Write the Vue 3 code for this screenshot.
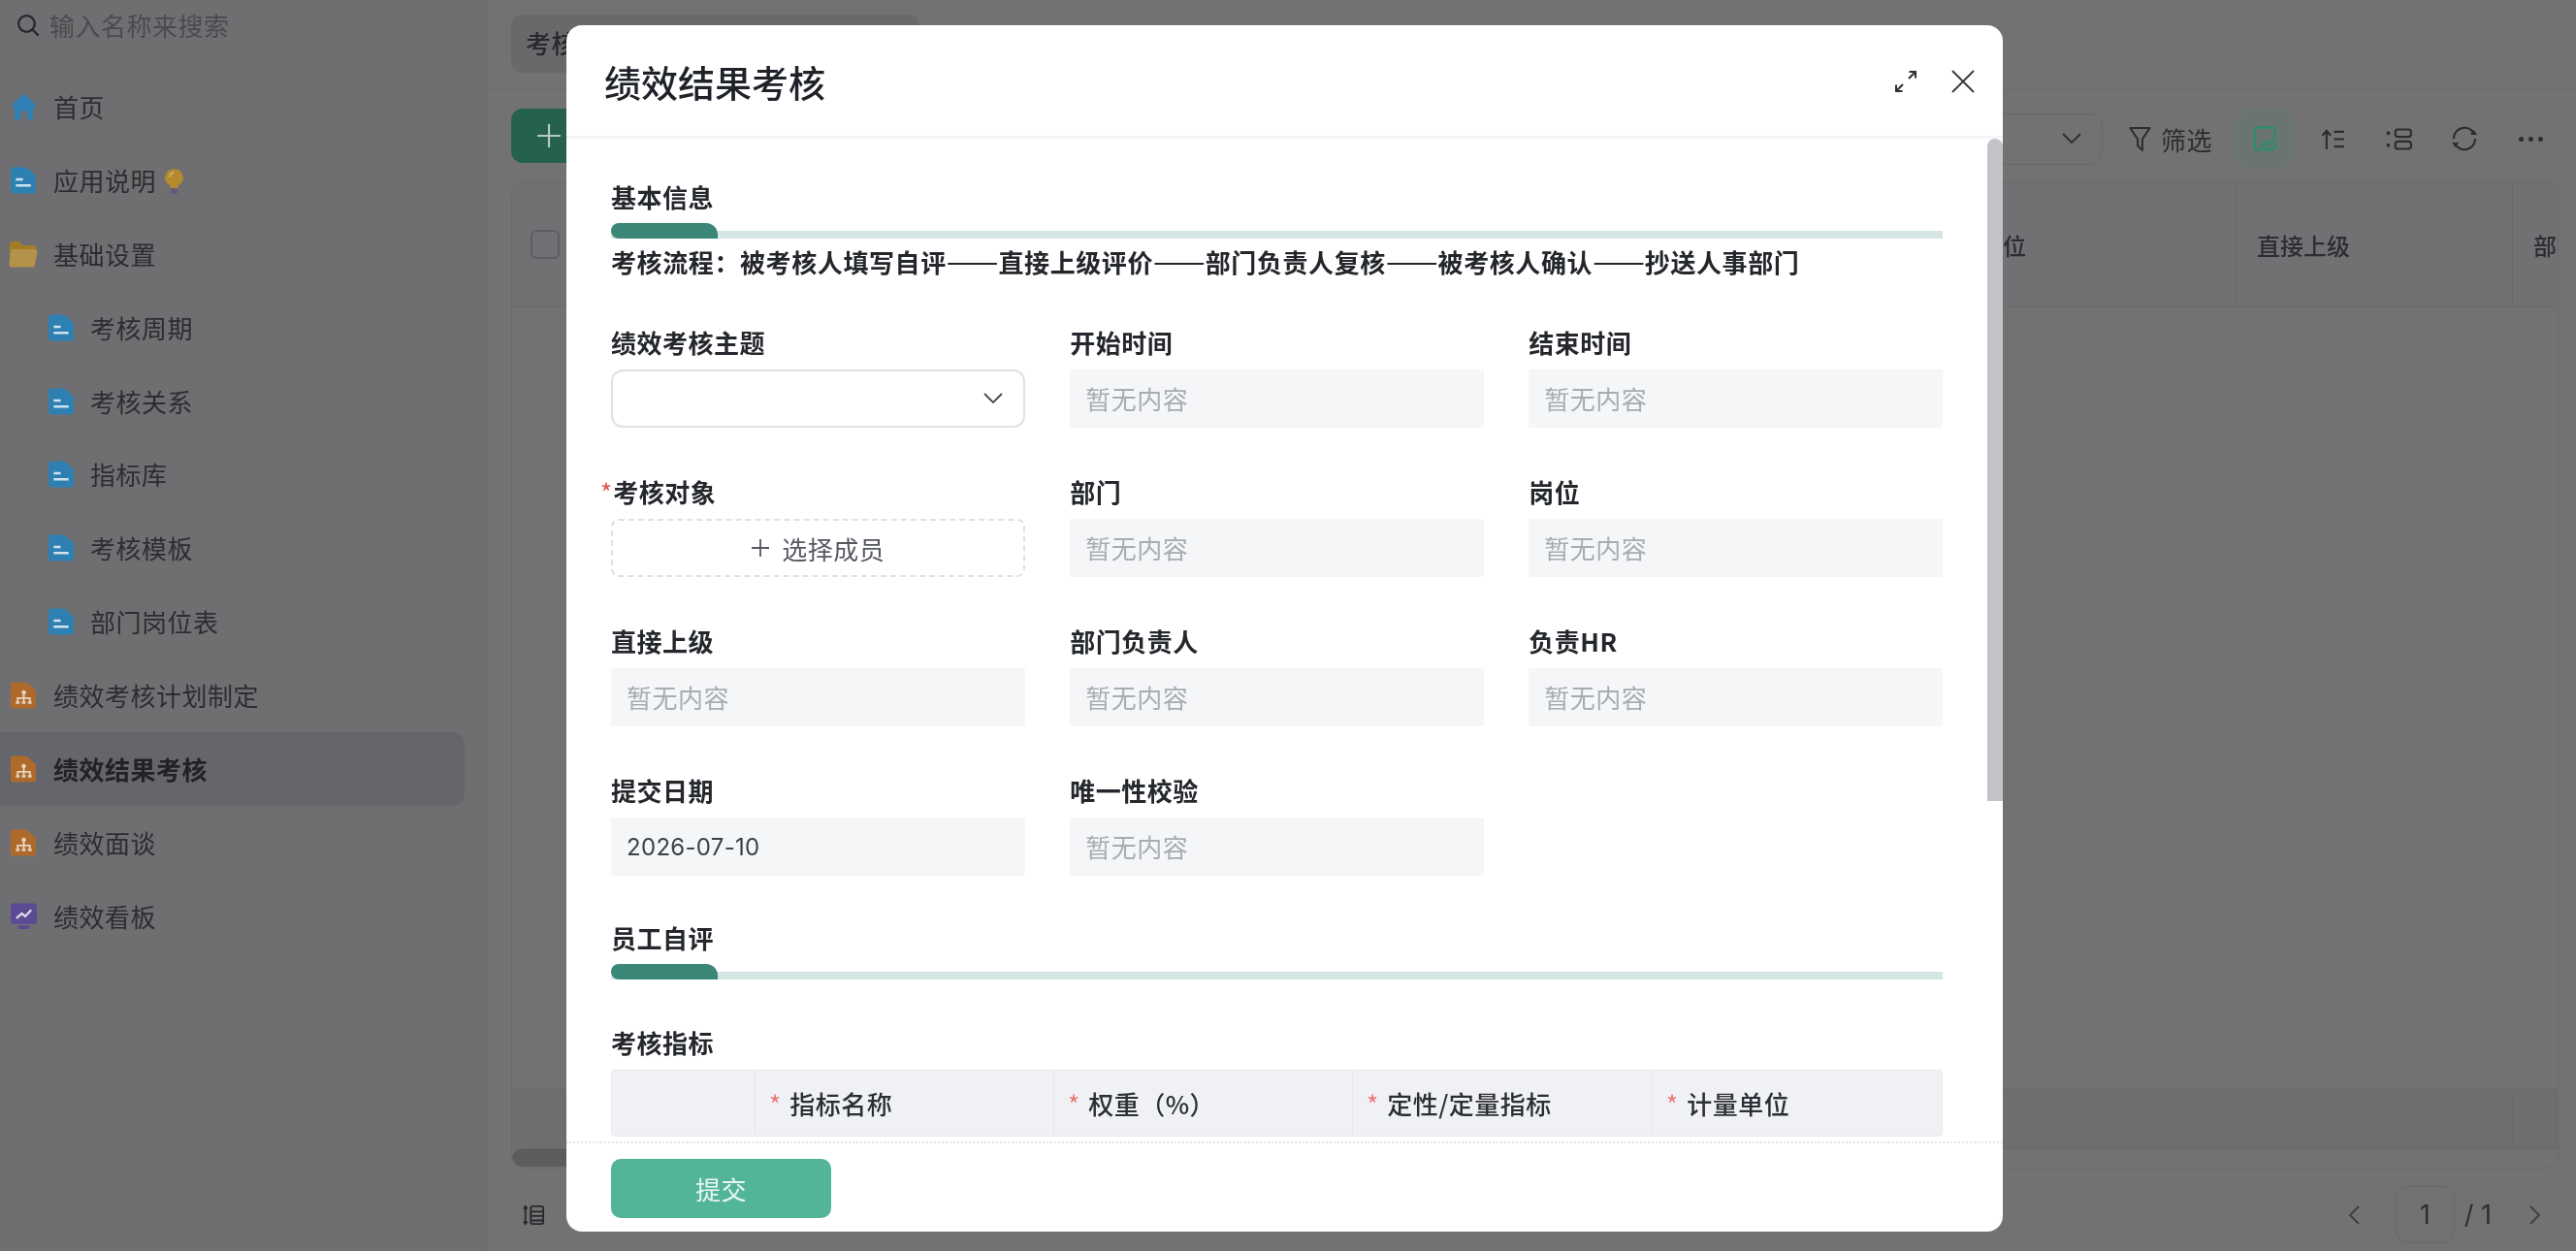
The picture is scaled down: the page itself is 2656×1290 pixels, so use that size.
<script setup>
const nav = [
  { label: '首页', icon: 'home' },
  { label: '应用说明', icon: 'doc', bulb: true },
  { label: '基础设置', icon: 'folder' },
  { label: '考核周期', icon: 'doc', sub: true },
  { label: '考核关系', icon: 'doc', sub: true },
  { label: '指标库', icon: 'doc', sub: true },
  { label: '考核模板', icon: 'doc', sub: true },
  { label: '部门岗位表', icon: 'doc', sub: true },
  { label: '绩效考核计划制定', icon: 'chart' },
  { label: '绩效结果考核', icon: 'chart', active: true },
  { label: '绩效面谈', icon: 'chart' },
  { label: '绩效看板', icon: 'board' }
]
const rows = [
  [{ label: '开始时间' }, { label: '结束时间' }],
  [{ label: '部门' }, { label: '岗位' }],
  [{ label: '直接上级' }, { label: '部门负责人' }, { label: '负责HR' }],
  [{ label: '提交日期', value: '2026-07-10' }, { label: '唯一性校验' }]
]
const metrics = ['指标名称', '权重（%）', '定性/定量指标', '计量单位']
</script>

<template>
  <div class="page">
    <aside class="side">
      <div class="search">
        <svg class="search-ico" viewBox="0 0 24 24" fill="none" stroke="#26282c" stroke-width="2.2" stroke-linecap="round"><circle cx="11" cy="11" r="8"/><path d="M17 17l5 5"/></svg>
        <span>输入名称来搜索</span>
      </div>
      <nav class="nav">
        <div v-for="item in nav" :key="item.label" class="nav-item" :class="{ sub: item.sub, active: item.active }">
          <svg v-if="item.icon === 'home'" class="nav-ico" viewBox="0 0 28 28"><path d="M14 0 28 13.500a.5.500 0 0 1-.4.8H24V26a2 2 0 0 1-2 2h-4.500v-9h-7v9H6a2 2 0 0 1-2-2V14.300H.4a.5.500 0 0 1-.4-.8Z" fill="#2f80b4"/></svg>
          <svg v-else-if="item.icon === 'doc'" class="nav-ico" viewBox="0 0 28 28"><path d="M3 0h14l10 9v16a3 3 0 0 1-3 3H3a3 3 0 0 1-3-3V3a3 3 0 0 1 3-3Z" fill="#2e80b2"/><path d="M5.500 13h7.500M5.500 19.500h16" stroke="#cfe2ee" stroke-width="2.600"/></svg>
          <svg v-else-if="item.icon === 'folder'" class="nav-ico folder" viewBox="0 0 30 28"><path d="M1 4a3 3 0 0 1 3-3h7l3 4h11a3 3 0 0 1 3 3v3H1Z" fill="#a67c22"/><path d="M4 9h23a2.500 2.500 0 0 1 2.500 3l-2.500 13a3 3 0 0 1-3 2.500H3a2.500 2.500 0 0 1-2.500-3L1.500 11.500A2.500 2.500 0 0 1 4 9Z" fill="#b5924a"/></svg>
          <svg v-else-if="item.icon === 'chart'" class="nav-ico" viewBox="0 0 28 28"><path d="M3 0h14l10 9v16a3 3 0 0 1-3 3H3a3 3 0 0 1-3-3V3a3 3 0 0 1 3-3Z" fill="#ad6a2b"/><circle cx="14" cy="11" r="2.400" fill="#e6d2bc"/><path d="M14 12v9M7.500 21v-4h13v4" fill="none" stroke="#e6d2bc" stroke-width="2"/><path d="M5.500 20.500h4v2.500h-4zM12 20.500h4v2.500h-4zM18.500 20.500h4v2.500h-4z" fill="#e6d2bc"/></svg>
          <svg v-else class="nav-ico" viewBox="0 0 28 28"><rect width="28" height="22" rx="3" fill="#5c4a94"/><path d="M8 23.500h12v4H8z" fill="#5c4a94"/><path d="M6 16l6-5 3.500 3L22 7" fill="none" stroke="#ddd6ea" stroke-width="2.400"/></svg>
          <span class="nav-text">{{ item.label }}</span>
          <svg v-if="item.bulb" class="bulb" viewBox="0 0 20 28"><path d="M10 0a9.500 9.500 0 0 1 6 17c-1.500 1.200-2 2.500-2 4H6c0-1.500-.5-2.800-2-4a9.500 9.500 0 0 1 6-17Z" fill="#b58a2c"/><path d="M5 9a5 5 0 0 1 5-5" fill="none" stroke="#cda95a" stroke-width="2.500"/><path d="M6.500 21h7v6h-7z" fill="#66597c"/></svg>
        </div>
      </nav>
    </aside>

    <main class="main">
      <div class="tabs"><div class="tab">考核</div></div>
      <div class="toolbar">
        <button class="add"><svg viewBox="0 0 24 24" width="26" height="26" fill="none" stroke="#b5c9c1" stroke-width="2"><path d="M12 1v22M1 12h22"/></svg></button>
        <div class="tools">
          <div class="view-select"><svg viewBox="0 0 20 12" width="20" height="12" fill="none" stroke="#2b2d31" stroke-width="1.800"><path d="M1 1l9 9 9-9"/></svg></div>
          <div class="filter">
            <svg viewBox="0 0 24 28" width="23" height="27" fill="none" stroke="#2b2d31" stroke-width="2.200"><path d="M1.500 2h21l-8 12v12l-5-5v-7Z" stroke-linejoin="round"/></svg>
            <span>筛选</span>
          </div>
          <div class="tool on"><svg viewBox="0 0 26 27" width="25" height="26" fill="none" stroke="#2f8b6d" stroke-width="2.600"><path d="M9 25.500H5a3.500 3.500 0 0 1-3.500-3.500V5A3.500 3.500 0 0 1 5 1.500h15A3.500 3.500 0 0 1 23.500 5v11"/><path d="M9 21c2-3 4.500-4.500 8-4.500s6 1.500 8 4.500c-2 3-4.500 4.500-8 4.500S11 24 9 21Z" fill="#6a7571"/><circle cx="17" cy="21" r="1.800" fill="#2f8b6d" stroke="none"/></svg></div>
          <div class="tool"><svg viewBox="0 0 26 22" width="25" height="21" fill="none" stroke="#2b2d31" stroke-width="2.200"><path d="M6 22V2M1.500 7 6 2l4.500 5M14 3h11M14 11h11M14 19h11"/></svg></div>
          <div class="tool"><svg viewBox="0 0 28 24" width="27" height="23" fill="none" stroke="#2b2d31" stroke-width="2.200"><rect x="10" y="1.500" width="17" height="8" rx="3"/><rect x="10" y="14.500" width="17" height="8" rx="3"/><circle cx="2.500" cy="5.500" r="2" fill="#2b2d31" stroke="none"/><circle cx="2.500" cy="18.500" r="2" fill="#2b2d31" stroke="none"/></svg></div>
          <div class="tool"><svg viewBox="0 0 28 28" width="28" height="28" fill="none" stroke="#2b2d31" stroke-width="2.200"><path d="M3 14A11 11 0 0 1 23 7.500M25 14A11 11 0 0 1 5 20.500"/><path d="M20 10h7l-3.500-5ZM8 18H1l3.500 5Z" fill="#2b2d31" stroke="none"/></svg></div>
          <div class="tool dots"><i></i><i></i><i></i></div>
        </div>
      </div>
      <div class="table">
        <div class="thead">
          <div class="c-check"><span class="check"></span></div>
          <div class="c-fill"></div>
          <div class="c-col">岗位</div>
          <div class="c-col">直接上级</div>
          <div class="c-last">部</div>
        </div>
        <div class="tbody"></div>
        <div class="tsum">
          <div class="c-check"></div>
          <div class="c-fill"></div>
          <div class="c-col"></div>
          <div class="c-col"></div>
          <div class="c-last"></div>
        </div>
        <div class="tscroll"><div class="tthumb"></div></div>
      </div>
      <div class="pager">
        <svg viewBox="0 0 24 22" width="22" height="22" fill="none" stroke="#26282c" stroke-width="2"><path d="M3 1v20M1 4l2-3 2 3M1 18l2 3 2-3"/><rect x="9" y="1" width="14" height="20" rx="2"/><path d="M9 7h14M9 12h14M9 17h14"/></svg>
        <div class="pages">
          <svg viewBox="0 0 12 20" width="12" height="20" fill="none" stroke="#3c3e42" stroke-width="1.800"><path d="M11 1 2 10l9 9"/></svg>
          <div class="page-box">1</div>
          <span class="page-total">/ 1</span>
          <svg viewBox="0 0 12 20" width="12" height="20" fill="none" stroke="#3c3e42" stroke-width="1.800"><path d="m1 1 9 9-9 9"/></svg>
        </div>
      </div>
    </main>

    <section class="modal">
      <header class="m-head">
        <h1>绩效结果考核</h1>
        <div class="m-actions">
          <svg viewBox="0 0 24 24" width="24" height="24" fill="none" stroke="#2d3035" stroke-width="2"><path d="M15 9l6.500-6.500M15.500 2H22v6.500M9 15l-6.500 6.500M8.500 22H2v-6.500"/></svg>
          <svg viewBox="0 0 24 24" width="24" height="24" fill="none" stroke="#33363b" stroke-width="1.800"><path d="M1 1l22 22M23 1 1 23"/></svg>
        </div>
      </header>
      <div class="m-body">
        <h2 class="sec">基本信息</h2>
        <div class="bar"><span></span></div>
        <p class="flow">考核流程：被考核人填写自评<span class="dash">——</span>直接上级评价<span class="dash">——</span>部门负责人复核<span class="dash">——</span>被考核人确认<span class="dash">——</span>抄送人事部门</p>
        <div class="grid">
          <div class="field">
            <label>绩效考核主题</label>
            <div class="select"><svg viewBox="0 0 20 12" width="20" height="12" fill="none" stroke="#44474d" stroke-width="1.800"><path d="M1 1l9 9 9-9"/></svg></div>
          </div>
          <div class="field" v-for="f in rows[0]" :key="f.label">
            <label>{{ f.label }}</label>
            <div class="ro">暂无内容</div>
          </div>
          <div class="field">
            <label><em>*</em>考核对象</label>
            <div class="picker"><svg viewBox="0 0 20 20" width="20" height="20" fill="none" stroke="#55585f" stroke-width="1.800"><path d="M10 1v18M1 10h18"/></svg>选择成员</div>
          </div>
          <div class="field" v-for="f in rows[1]" :key="f.label">
            <label>{{ f.label }}</label>
            <div class="ro">暂无内容</div>
          </div>
          <div class="field" v-for="f in rows[2]" :key="f.label">
            <label>{{ f.label }}</label>
            <div class="ro">暂无内容</div>
          </div>
          <div class="field" v-for="f in rows[3]" :key="f.label">
            <label>{{ f.label }}</label>
            <div class="ro" :class="{ filled: f.value }">{{ f.value || '暂无内容' }}</div>
          </div>
        </div>
        <h2 class="sec second">员工自评</h2>
        <div class="bar"><span></span></div>
        <div class="metric-label">考核指标</div>
        <div class="metric-head">
          <div class="mc"></div>
          <div class="mc" v-for="m in metrics" :key="m"><em>*</em>{{ m }}</div>
        </div>
      </div>
      <footer class="m-foot"><button>提交</button></footer>
      <div class="m-thumb"></div>
    </section>
  </div>
</template>

<style>
html, body { margin: 0; background: #727272; }
</style>

<style scoped>
* { box-sizing: border-box; }
.page {
  position: relative;
  width: 2656px;
  height: 1290px;
  overflow: hidden;
  display: flex;
  background: #727272;
  color: #26282c;
  font-family: "Noto Sans CJK SC", "Noto Sans", sans-serif;
  font-size: 26px;
  letter-spacing: .5px;
  filter: blur(.55px);
}
.side { width: 503px; height: 100%; background: #6f6f71; border-right: 1px solid #6d6d6f; flex: none; }
.search { height: 50px; display: flex; align-items: center; padding-left: 16px; gap: 10px; color: #4a4b4e; }
.search-ico { width: 25px; height: 25px; flex: none; }
.nav { padding-top: 22px; }
.nav-item { height: 75.900px; width: 479px; display: flex; align-items: center; padding-left: 11px; border-radius: 0 12px 12px 0; color: #2c2d30; }
.nav-item.sub { padding-left: 50px; }
.nav-item.sub .nav-ico { margin-right: 16px; }
.nav-item.active { background: #65666b; color: #202226; font-weight: 700; }
.nav-ico { width: 27px; height: 28px; flex: none; margin-right: 17px; }
.nav-ico.folder { width: 30px; margin-left: -2px; margin-right: 16px; }
.nav-text { line-height: 1; }
.bulb { width: 19px; height: 27px; margin: 3px 0 0 9px; }
.main { flex: 1; min-width: 0; padding: 15px 18px 0 24px; display: flex; flex-direction: column; }
.tabs { height: 78px; margin: 0 -18px 0 -24px; padding-left: 24px; border-bottom: 1px solid #6b6b6d; }
.tab { width: 421px; height: 60px; background: #69696b; border-radius: 12px; line-height: 58px; padding-left: 15px; font-weight: 500; }
.toolbar { height: 94px; padding-top: 19px; display: flex; justify-content: space-between; align-items: flex-start; }
.add { width: 90px; height: 56px; border: 0; border-radius: 12px; background: #25614e; display: flex; align-items: center; padding-left: 26px; }
.tools { display: flex; align-items: center; margin-top: 1px; height: 60px; }
.view-select { width: 150px; height: 53px; border: 1.500px solid #676769; border-radius: 14px; display: flex; align-items: center; justify-content: flex-end; padding-right: 21px; margin-right: 27px; }
.filter { display: flex; align-items: center; gap: 10px; margin-right: 25px; color: #2b2d31; }
.tool { width: 58px; height: 60px; display: flex; align-items: center; justify-content: center; border-radius: 12px; margin-right: 10px; }
.tool.on { background: #6a7571; margin-right: 12px; }
.tool.dots { gap: 5px; margin-right: 0; }
.dots i { width: 5px; height: 5px; border-radius: 50%; background: #2b2d31; }
.table { flex: none; height: 1018px; border: 1px solid #6a6a6c; border-radius: 14px; display: flex; flex-direction: column; overflow: hidden; }
.thead { height: 129px; display: flex; border-bottom: 1px solid #696a6c; background: #707172; flex: none; color: #2b2d31; font-size: 24px; font-weight: 500; letter-spacing: 0; }
.thead > div { display: flex; align-items: center; }
.c-check { width: 60px; flex: none; padding-left: 19px; }
.check { width: 30px; height: 30px; border: 2px solid #5d5e61; border-radius: 6px; display: block; }
.c-fill { flex: 1; }
.c-col { width: 286px; flex: none; border-left: 1px solid #696a6c; padding-left: 22px; }
.c-last { width: 47px; flex: none; white-space: nowrap; border-left: 1px solid #696a6c; padding-left: 21px; }
.tbody { flex: 1; }
.tsum { height: 63px; display: flex; flex: none; background: #6d6e70; border-top: 1px solid #69696b; border-bottom: 1px solid #69696b; }
.tscroll { height: 19px; flex: none; }
.tthumb { width: 500px; height: 18px; border-radius: 9px; background: #5b5c5e; }
.pager { display: flex; align-items: center; justify-content: space-between; padding: 18px 18px 0 12px; height: 77px; flex: none; }
.pages { display: flex; align-items: center; font-family: "Inter", "Noto Sans", sans-serif; color: #2b2d31; font-size: 27px; letter-spacing: 0; }
.page-box { width: 61px; height: 59px; border: 1.500px solid #68686a; border-radius: 12px; display: flex; align-items: center; justify-content: center; margin: 0 10px 0 37px; }
.page-total { margin-right: 39px; }
.modal {
  position: absolute;
  left: 584px;
  top: 26px;
  width: 1481px;
  height: 1244px;
  background: #fff;
  border-radius: 16px;
  overflow: hidden;
  display: flex;
  flex-direction: column;
}
.m-head { height: 117px; flex: none; border-bottom: 3px solid #f5f5f6; display: flex; align-items: center; justify-content: space-between; padding: 2px 29px 0 39px; }
.m-head h1 { margin: 0; font-size: 38px; font-weight: 500; color: #1f2329; line-height: 1; letter-spacing: 0; }
.m-actions { display: flex; align-items: center; gap: 35px; }
.m-body { flex: 1; min-height: 0; overflow: hidden; padding: 41px 62px 0 46px; }
.sec { margin: 0; font-size: 26px; font-weight: 700; color: #24272c; line-height: 38px; }
.sec.second { margin-top: 45px; }
.bar { height: 16px; margin-top: 8px; position: relative; display: flex; align-items: flex-end; }
.bar::before { content: ""; display: block; width: 100%; height: 8px; background: #d3e6e3; }
.bar span { position: absolute; left: 0; top: 0; width: 110px; height: 16px; background: #3a8778; border-radius: 8px 12px 0 8px; }
.flow { margin: 5px 0 0; font-weight: 700; line-height: 38px; color: #23262b; white-space: nowrap; letter-spacing: .6px; }
.dash { font-size: 32px; line-height: 0; letter-spacing: 0; font-weight: 400; }
.grid { display: grid; grid-template-columns: repeat(3, 1fr); column-gap: 46.500px; row-gap: 47px; margin-top: 45px; }
.field label { display: block; font-weight: 700; line-height: 38px; color: #24272c; margin-bottom: 9px; white-space: nowrap; }
.field label em { font-style: normal; font-weight: 400; color: #e1554e; margin-left: -11px; margin-right: 1px; font-size: 26px; letter-spacing: 0; }
.select { height: 60px; border: 2px solid #dfe1e6; border-radius: 12px; display: flex; align-items: center; justify-content: flex-end; padding-right: 21px; background: #fff; }
.ro { height: 60px; background: #f5f6f8; line-height: 60px; padding-left: 16px; color: #a8abb2; border-radius: 2px; }
.ro.filled { color: #3c4048; font-family: "Inter", "Noto Sans", sans-serif; font-size: 24px; letter-spacing: .3px; line-height: 62px; }
.picker { height: 60px; border: 2px dashed #e0e1e5; border-radius: 8px; display: flex; align-items: center; justify-content: center; gap: 12px; color: #55585f; }
.metric-label { margin-top: 46px; font-weight: 700; line-height: 38px; color: #24272c; }
.metric-head { margin-top: 9px; display: grid; grid-template-columns: 148px 308px 308px 309px 300px; height: 69px; background: #f0f1f5; border: 1px solid #e9eaef; border-radius: 4px; overflow: hidden; }
.mc { border-right: 1px solid #e5e6eb; display: flex; align-items: center; padding-left: 14px; color: #2b2e34; font-weight: 500; white-space: nowrap; }
.mc:last-child { border-right: 0; }
.mc em { font-style: normal; color: #e77; margin-right: 9px; font-size: 26px; font-weight: 400; letter-spacing: 0; }
.m-foot { height: 93px; flex: none; border-top: 2px dotted #e6e7ea; padding: 16px 0 0 46px; }
.m-foot button { width: 227px; height: 61px; border: 0; border-radius: 10px; background: #52b59a; color: #e9f6f2; font: inherit; letter-spacing: .5px; }
.m-thumb { position: absolute; right: 0; top: 117px; width: 16px; height: 683px; border-radius: 8px 8px 0 0; background: #c2c3c8; }
</style>
